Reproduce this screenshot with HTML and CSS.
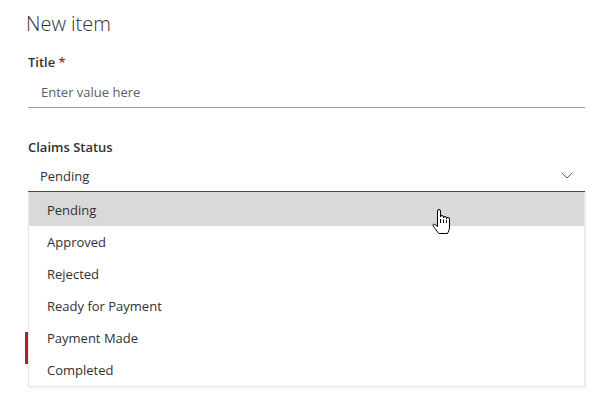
FILE: index.html
```html
<!DOCTYPE html>
<html lang="en">
<head>
<meta charset="utf-8">
<title>New item</title>
<link rel="stylesheet" href="styles.css">
</head>
<body>
<div class="form">
  <h1 class="form-title">New item</h1>
  <div class="field">
    <label class="field-label">Title <span class="req">*</span></label>
    <div class="text-input"><span class="placeholder">Enter value here</span></div>
  </div>
  <div class="field field-dropdown">
    <label class="field-label">Claims Status</label>
    <div class="dropdown">
      <span class="dropdown-value">Pending</span>
      <svg class="chevron" width="12" height="7" viewBox="0 0 12 7"><path d="M0.5 0.5 L6 6 L11.5 0.5" fill="none" stroke="#605e5c" stroke-width="1"/></svg>
    </div>
    <ul class="menu">
      <li class="menu-item is-hover">Pending</li>
      <li class="menu-item">Approved</li>
      <li class="menu-item">Rejected</li>
      <li class="menu-item">Ready for Payment</li>
      <li class="menu-item">Payment Made</li>
      <li class="menu-item">Completed</li>
    </ul>
  </div>
  <div class="hidden-fields"></div>
  <div class="actions">
    <button class="btn-primary" aria-label="Save"></button>
  </div>
</div>
<svg class="cursor" width="19" height="27" viewBox="0 0 19 27">
  <path d="M5.5 14 V2 a1.5 1.5 0 0 1 3 0 V8 a1.5 1.5 0 0 1 3 0 V9 a1.5 1.5 0 0 1 3 0 V10 a1.5 1.5 0 0 1 3 0 V18 c0 3-1.2 4.8-2 6.5 H6.8 C5.2 22.5 2.5 19 1.2 17 c-0.7-1.1 0.3-2.3 1.4-1.6 L5.5 17.5 Z" fill="#fff" stroke="#000" stroke-width="1" stroke-linejoin="round"/>
  <path d="M8.5 10 V14 M11.5 10.5 V14 M14.5 11 V14" stroke="#000" stroke-width="1" fill="none"/>
</svg>
</body>
</html>
```
FILE: styles.css
```css
html, body {
  margin: 0;
  padding: 0;
  background: #ffffff;
}
body {
  font-family: "Open Sans", "Noto Sans", "Liberation Sans", sans-serif;
  color: #323130;
  width: 614px;
  height: 405px;
  overflow: hidden;
  position: relative;
}
.form {
  padding: 10px 29px 0 28px;
  display: flex;
  flex-direction: column;
}
.form-title {
  margin: 0 0 0 -2px;
  font-weight: 300;
  font-size: 20px;
  line-height: 28px;
  color: #323130;
}
.field {
  display: flex;
  flex-direction: column;
  margin-top: 14px;
}
.field-dropdown {
  margin-top: 29px;
  position: relative;
}
.field-label {
  font-size: 13px;
  font-weight: 600;
  line-height: 20px;
  color: #323130;
  margin-bottom: 4px;
}
.field-dropdown .field-label {
  margin-bottom: 3px;
}
.req {
  color: #a4262c;
}
.text-input {
  height: 31px;
  border-bottom: 1px solid #a19f9d;
  display: flex;
  align-items: center;
  padding-left: 13px;
}
.placeholder {
  font-size: 13px;
  color: #605e5c;
}
.dropdown {
  height: 31px;
  border-bottom: 1px solid #a4262c;
  display: flex;
  align-items: center;
  justify-content: space-between;
  padding: 0 12px 0 12px;
  font-size: 13px;
  color: #323130;
}
.menu {
  position: absolute;
  z-index: 2;
  top: 55px;
  left: 0;
  right: 0;
  margin: 0;
  padding: 0;
  list-style: none;
  background: #ffffff;
  border: 1px solid #e6e6e6;
  border-top: none;
  box-shadow: 1px 1px 2px rgba(0, 0, 0, 0.08);
}
.menu-item {
  box-sizing: border-box;
  height: 32px;
  display: flex;
  align-items: center;
  padding-left: 18px;
  font-size: 13px;
  color: #323130;
}
.menu-item:first-child {
  height: 34px;
  padding-top: 2px;
}
.menu-item.is-hover {
  background: #d9d9d9;
}
.hidden-fields {
  height: 140px;
}
.actions {
  display: flex;
}
.btn-primary {
  margin-left: -3px;
  width: 80px;
  height: 32px;
  border: none;
  background: #a4262c;
}
.cursor {
  position: absolute;
  left: 432px;
  top: 209px;
  z-index: 5;
}
```
